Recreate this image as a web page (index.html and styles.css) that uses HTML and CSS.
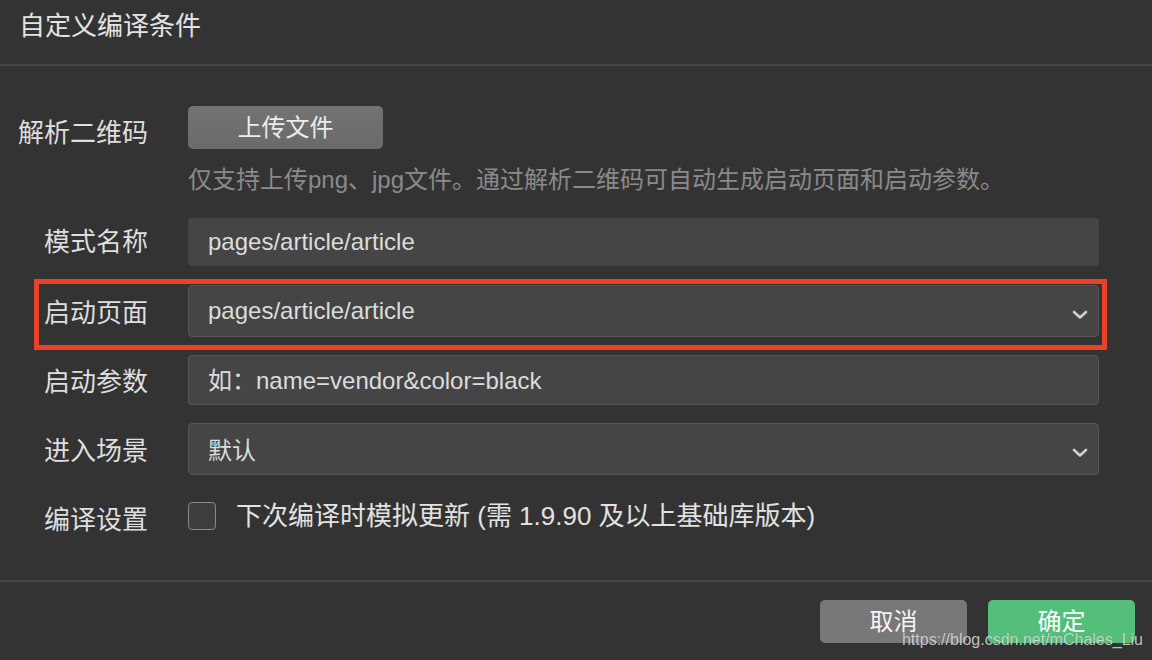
FILE: index.html
```html
<!DOCTYPE html>
<html lang="zh-CN">
<head>
<meta charset="utf-8">
<title>自定义编译条件</title>
<link rel="stylesheet" href="styles.css">
</head>
<body>
<div class="dialog">
  <div class="header"><span class="title">自定义编译条件</span></div>
  <div class="form">
    <div class="row row-upload">
      <div class="label label-upload">解析二维码</div>
      <div class="field-col">
        <button class="upload-btn">上传文件</button>
        <div class="hint">仅支持上传png、jpg文件。通过解析二维码可自动生成启动页面和启动参数。</div>
      </div>
    </div>
    <div class="row row-name">
      <div class="label">模式名称</div>
      <div class="input input-plain">pages/article/article</div>
    </div>
    <div class="row row-page highlight">
      <div class="label">启动页面</div>
      <div class="input select">
        <span>pages/article/article</span>
        <svg class="chev" width="16" height="10" viewBox="0 0 16 10"><polyline points="2,2 8,7.5 14,2" fill="none" stroke="#cfcfcf" stroke-width="2.6" stroke-linecap="round" stroke-linejoin="round"/></svg>
      </div>
    </div>
    <div class="row row-param">
      <div class="label">启动参数</div>
      <div class="input input-param">如：name=vendor&amp;color=black</div>
    </div>
    <div class="row row-scene">
      <div class="label">进入场景</div>
      <div class="input select">
        <span>默认</span>
        <svg class="chev" width="16" height="10" viewBox="0 0 16 10"><polyline points="2,2 8,7.5 14,2" fill="none" stroke="#cfcfcf" stroke-width="2.6" stroke-linecap="round" stroke-linejoin="round"/></svg>
      </div>
    </div>
    <div class="row row-check">
      <div class="label label-check">编译设置</div>
      <div class="check-wrap">
        <span class="checkbox"></span>
        <span class="check-text">下次编译时模拟更新 (需 1.9.90 及以上基础库版本)</span>
      </div>
    </div>
  </div>
  <div class="footer">
    <button class="btn btn-cancel">取消</button>
    <button class="btn btn-ok">确定</button>
  </div>
  <div class="watermark">https://blog.csdn.net/mChales_Liu</div>
</div>
</body>
</html>
```
FILE: styles.css
```css
* { box-sizing: border-box; }
html, body {
  margin: 0;
  padding: 0;
  background: #333333;
}
body {
  width: 1152px;
  height: 660px;
  overflow: hidden;
  font-family: "Liberation Sans", "Noto Sans CJK SC", sans-serif;
  color: #dcdcdc;
}
.dialog {
  position: relative;
  width: 1152px;
  height: 660px;
}
.header {
  height: 66px;
  padding-left: 19px;
  border-bottom: 2px solid #464646;
}
.title {
  display: block;
  font-size: 26px;
  line-height: 52px;
  color: #e4e4e4;
}
.form {
  padding-top: 40px;
  padding-right: 53px;
  height: 514px;
}
.row {
  display: flex;
  align-items: center;
  gap: 40px;
}
.label {
  width: 148px;
  flex: none;
  text-align: right;
  font-size: 26px;
  line-height: 34px;
  color: #dedede;
}
.row-upload { align-items: flex-start; }
.label-upload {
  margin-top: 6px;
  line-height: 43px;
}
.field-col {
  flex: 1;
  display: flex;
  flex-direction: column;
  align-items: flex-start;
}
.upload-btn {
  width: 195px;
  height: 43px;
  border: none;
  border-radius: 5px;
  background: linear-gradient(#737373, #6a6a6a);
  color: #ececec;
  font-family: inherit;
  font-size: 24px;
  padding: 0;
  line-height: 43px;
}
.hint {
  margin-top: 17px;
  font-size: 24px;
  line-height: 28px;
  color: #8a8a8a;
}
.input {
  flex: 1;
  display: flex;
  align-items: center;
  background: #454545;
  border: 1px solid #555555;
  border-radius: 4px;
  padding-left: 19px;
  font-size: 24px;
  color: #dcdcdc;
}
.input-plain {
  border-color: #454545;
  height: 48px;
  border-radius: 3px;
}
.row-name { margin-top: 24px; }
.row-page { margin-top: 19px; }
.row-param { margin-top: 18px; }
.row-scene { margin-top: 18px; }
.select {
  height: 52px;
  justify-content: space-between;
  padding-right: 10px;
}
.input-param {
  height: 50px;
  padding-bottom: 3px;
}
.row-scene .select { padding-bottom: 2px; }
.row-scene .chev { margin-top: 9px; }
.chev { margin-top: 7px; }
.row-page .label,
.row-scene .label,
.row-param .label { margin-top: 3px; }
.highlight { position: relative; }
.highlight::after {
  content: "";
  position: absolute;
  left: 34px;
  right: -8px;
  top: -6px;
  bottom: -13px;
  border: 5px solid #ea4128;
  pointer-events: none;
}
.row-check {
  margin-top: 27px;
  align-items: flex-start;
}
.label-check { margin-top: 1px; }
.check-wrap {
  display: flex;
  align-items: center;
  gap: 20px;
  height: 28px;
}
.checkbox {
  width: 28px;
  height: 28px;
  border: 1px solid #8a8a8a;
  border-radius: 4px;
  background: #3e3e3e;
  flex: none;
}
.check-text {
  font-size: 26px;
  line-height: 28px;
  color: #e2e2e2;
}
.footer {
  border-top: 2px solid #464646;
  display: flex;
  justify-content: flex-end;
  gap: 21px;
  padding-top: 18px;
  padding-right: 17px;
}
.btn {
  width: 147px;
  height: 43px;
  border: none;
  border-radius: 5px;
  font-family: inherit;
  font-size: 24px;
  line-height: 43px;
  padding: 0;
  color: #f4f4f4;
}
.btn-cancel { background: #787878; }
.btn-ok { background: #53bf7a; color: #ffffff; }
.watermark {
  position: absolute;
  right: 9px;
  bottom: 11px;
  font-family: "Liberation Sans", sans-serif;
  font-size: 16px;
  line-height: 18px;
  color: rgba(235, 235, 235, 0.8);
  text-shadow: 0 0 1px rgba(0, 0, 0, 0.3);
}
```
